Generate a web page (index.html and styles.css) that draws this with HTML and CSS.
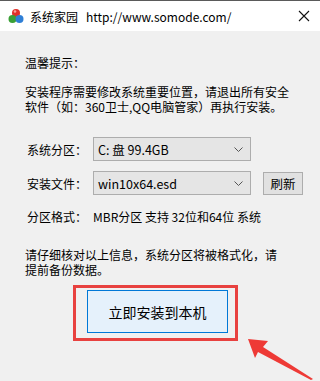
FILE: index.html
```html
<!DOCTYPE html>
<html>
<head>
<meta charset="utf-8">
<link rel="stylesheet" href="styles.css">
</head>
<body>
<div class="window">
  <div class="titlebar">
    <svg class="logo" width="16" height="16" viewBox="0 0 16 16">
      <circle cx="8" cy="5" r="4" fill="#e0302a"/>
      <circle cx="4.5" cy="11" r="4" fill="#3aa035"/>
      <circle cx="11.5" cy="11" r="4" fill="#2f7fd6"/>
      <circle cx="7" cy="3.5" r="1.3" fill="#f6a5a0"/>
    </svg>
    <span class="title">系统家园</span>
    <span class="url">http://www.somode.com/</span>
    <svg class="close" width="12" height="12" viewBox="0 0 12 12">
      <path d="M1 1 L11 11 M11 1 L1 11" stroke="#111" stroke-width="1.1"/>
    </svg>
  </div>
  <div class="content">
    <p class="tip">温馨提示：</p>
    <p class="para">安装程序需要修改系统重要位置，请退出所有安全<br>软件（如：360卫士,QQ电脑管家）再执行安装。</p>
    <div class="row row1">
      <span class="label">系统分区：</span>
      <div class="select"><span>C: 盘 99.4GB</span><svg class="chev" width="9" height="5" viewBox="0 0 9 5"><path d="M0.5 0.5 L4.5 4.5 L8.5 0.5" fill="none" stroke="#555" stroke-width="1"/></svg></div>
    </div>
    <div class="row row2">
      <span class="label">安装文件：</span>
      <div class="select"><span>win10x64.esd</span><svg class="chev" width="9" height="5" viewBox="0 0 9 5"><path d="M0.5 0.5 L4.5 4.5 L8.5 0.5" fill="none" stroke="#555" stroke-width="1"/></svg></div>
      <div class="btn-refresh">刷新</div>
    </div>
    <p class="format"><span class="label">分区格式：</span>MBR分区 支持 32位和64位 系统</p>
    <p class="warn">请仔细核对以上信息，系统分区将被格式化，请<br>提前备份数据。</p>
    <div class="install-wrap">
      <div class="highlight">
        <div class="install">立即安装到本机</div>
      </div>
    </div>
  </div>
  <svg class="arrow" width="320" height="381" viewBox="0 0 320 381">
    <polygon points="248,339 268,341 263,347 313,379 311,380 258,352 255,358" fill="#ee3a36"/>
  </svg>
</div>
</body>
</html>
```

FILE: styles.css
```css
* { box-sizing: border-box; }
html, body { margin: 0; padding: 0; }
body {
  width: 320px;
  height: 381px;
  overflow: hidden;
  background: #f0f0f0;
  font-family: "Noto Sans CJK SC", "Microsoft YaHei", sans-serif;
  font-size: 12px;
  color: #000;
}
.window {
  position: relative;
  width: 320px;
  height: 381px;
}
.titlebar {
  height: 31px;
  background: #fff;
  border-top: 1px solid #5a5a5a;
  display: flex;
  align-items: center;
  padding-left: 8px;
}
.logo { margin-right: 6px; }
.title { font-size: 12px; }
.url { font-size: 12px; margin-left: 8px; }
.close { margin-left: auto; margin-right: 10px; }
.content {
  padding-left: 25px;
  padding-top: 24px;
}
p { margin: 0; line-height: 15px; }
.para { margin-top: 14px; }
.row {
  display: flex;
  align-items: center;
  height: 24px;
}
.row1 { margin-top: 23px; }
.row2 { margin-top: 10px; }
.label { display: inline-block; width: 68px; padding-left: 2px; }
.select {
  width: 158px;
  height: 24px;
  background: #e5e5e5;
  border: 1px solid #adadad;
  display: flex;
  align-items: center;
  padding-left: 4px;
  font-size: 12.5px;
}
.chev { margin-left: auto; margin-right: 7px; }
.btn-refresh {
  margin-left: 12px;
  width: 40px;
  height: 23px;
  background: #e1e1e1;
  border: 1px solid #adadad;
  display: flex;
  align-items: center;
  justify-content: center;
  font-size: 12.5px;
}
.format { margin-top: 14px; }
.format .label { width: 68px; }
.warn { margin-top: 23px; }
.install-wrap {
  margin-top: 8px;
  padding-left: 48px;
}
.highlight {
  width: 165px;
  height: 56px;
  border: 3px solid #e8413f;
  padding: 2px 0 0 11px;
}
.install {
  width: 141px;
  height: 43px;
  background: #e5f1fb;
  border: 1px solid #0078d7;
  display: flex;
  align-items: center;
  justify-content: center;
  font-size: 14px;
}
.arrow {
  position: absolute;
  left: 0;
  top: 0;
  pointer-events: none;
}
```
